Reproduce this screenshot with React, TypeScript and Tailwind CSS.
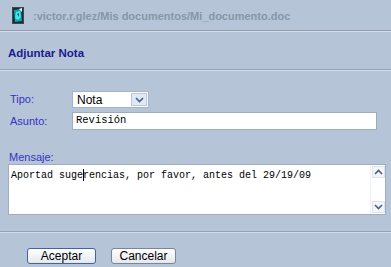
import React from 'react';

function DocIcon() {
  return (
    <svg width="12" height="17" viewBox="0 0 12 17">
      <rect x="0.5" y="0.5" width="11" height="16" fill="#1b2b33" stroke="#3a4a50" />
      <path d="M2 3 L9 2 L10 14 L3 15 Z" fill="#13a3a8" />
      <path d="M4 5 L8 4 L9 10 L6 13 L3 11 Z" fill="#3ee8f0" />
      <path d="M7 2 L10 1 L10 5 Z" fill="#e8f8f8" />
      <path d="M5 7 L7 6 L7 10 Z" fill="#0d5f66" />
    </svg>
  );
}

function Chevron({ up = false }: { up?: boolean }) {
  return (
    <svg width="9" height="6" viewBox="0 0 9 6">
      <path
        d={up ? 'M1 5 L4.5 1.5 L8 5' : 'M1 1 L4.5 4.5 L8 1'}
        fill="none"
        stroke="#4a5f86"
        strokeWidth="1.6"
      />
    </svg>
  );
}

export default function App() {
  return (
    <div
      className="w-[391px] h-[267px] bg-[#b5c5d7] overflow-hidden flex flex-col"
      style={{ fontFamily: '"Liberation Sans", Arial, sans-serif' }}
    >
      {/* header */}
      <div className="h-[31px] flex items-center pl-[12px] gap-[9px] border-b border-[#8f9caf]">
        <DocIcon />
        <span className="text-[11px] font-bold text-[#8796a8] pt-[2px]">
          :victor.r.glez/Mis documentos/Mi_documento.doc
        </span>
      </div>
      <div className="h-[39px] flex items-center pl-[8px] border-t border-[#d3dce8] border-b border-b-[#95a3b6]">
        <span className="text-[11.5px] font-bold text-[#1b1b8c] pt-[6px]">Adjuntar Nota</span>
      </div>
      <div className="border-t border-[#d3dce8] flex-1 flex flex-col">
        <div className="pt-[20px] pl-[10px] flex flex-col gap-[4px]">
          <div className="flex items-center">
            <span className="w-[62px] text-[11px] text-[#3434c4]">Tipo:</span>
            <div className="w-[77px] h-[17px] bg-white border border-[#a5b3c6] flex items-center justify-between pl-[4px] pr-[1px]">
              <span className="text-[12px] text-black">Nota</span>
              <div className="w-[16px] h-[13px] bg-[#dfe8f5] border border-[#b8c7dc] flex items-center justify-center">
                <Chevron />
              </div>
            </div>
          </div>
          <div className="flex items-center">
            <span className="w-[62px] text-[11px] text-[#3434c4]">Asunto:</span>
            <div className="w-[305px] h-[18px] bg-white border border-[#9eabbd] flex items-center pl-[3px]">
              <span
                className="text-[10.5px] text-black"
                style={{ fontFamily: '"Liberation Mono", "Courier New", monospace' }}
              >
                Revisión
              </span>
            </div>
          </div>
        </div>
        <div className="pl-[8px] mt-[21px]">
          <div className="text-[11px] text-[#3434c4] leading-[12px] pl-[1px]">Mensaje:</div>
          <div className="mt-[1px] w-[378px] h-[51px] bg-white border border-[#a0aec0] flex">
            <div
              className="flex-1 pl-[2px] pt-[3px] text-[10px] text-black"
              style={{ fontFamily: '"Liberation Mono", "Courier New", monospace' }}
            >
              Aportad suge
              <span className="inline-block w-[1px] h-[12px] bg-black align-middle -mx-[0.5px]" />
              rencias, por favor, antes del 29/19/09
            </div>
            <div className="w-[15px] flex flex-col justify-between items-center py-[1px] border-l border-[#eef1f5]">
              <div className="w-[13px] h-[12px] bg-[#f3f5f8] border border-[#dde3ea] flex items-center justify-center">
                <Chevron up />
              </div>
              <div className="w-[13px] h-[12px] bg-[#f3f5f8] border border-[#dde3ea] flex items-center justify-center">
                <Chevron />
              </div>
            </div>
          </div>
        </div>
        <div className="mt-[16px] border-t border-[#95a3b6]" />
        <div className="border-t border-[#d3dce8]" />
        <div className="flex gap-[15px] pl-[27px] mt-[15px]">
          <button className="w-[69px] h-[16px] rounded-[3px] border border-[#3d64a8] bg-gradient-to-b from-white to-[#e4e7ec] text-[12px] leading-[14px] text-black">
            Aceptar
          </button>
          <button className="w-[65px] h-[16px] rounded-[3px] border border-[#7c8594] bg-gradient-to-b from-white to-[#e4e7ec] text-[12px] leading-[14px] text-black">
            Cancelar
          </button>
        </div>
      </div>
    </div>
  );
}
